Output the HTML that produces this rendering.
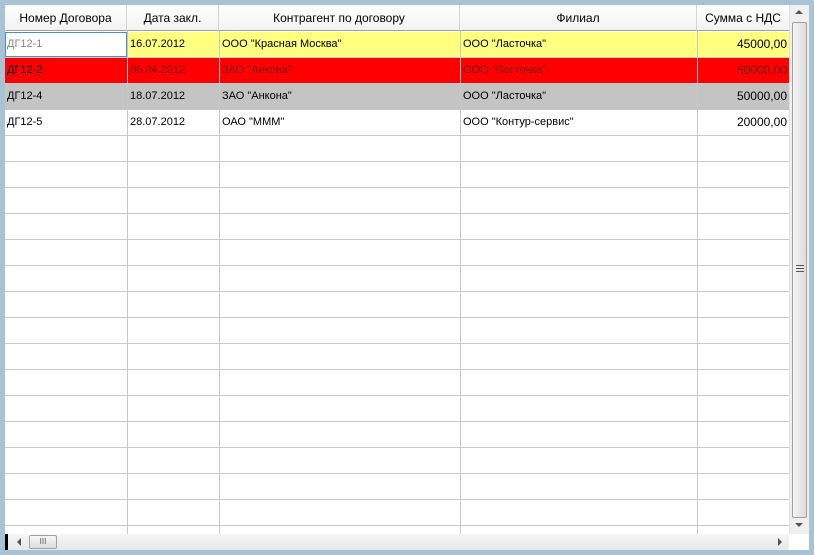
<!DOCTYPE html>
<html><head><meta charset="utf-8"><style>
*{margin:0;padding:0;box-sizing:border-box}
body{width:814px;height:555px;background:#a9c2d4;position:relative;overflow:hidden;font-family:"Liberation Sans",Arial,sans-serif}
#g{position:absolute;left:5px;top:5px;width:804px;height:545px;background:#fff}
.h{position:absolute;top:0;height:26px;font-size:12px;line-height:26px;text-align:center;color:#000;background:linear-gradient(#fff,#f3f3f3);border-right:1px solid #d5d5d5;border-bottom:1px solid #a0a0a0}
.vl{position:absolute;top:26px;height:503px;width:1px;background:#c8c8c8}
.hl{position:absolute;left:0;width:784px;height:1px;background:#c8c8c8}
.r{position:absolute;left:0;width:784px;height:25px}
.c{position:absolute;font-size:11px;line-height:25px;padding-left:2px;white-space:nowrap}
.dr{color:#7a0000}
</style></head><body>
<div id="g">
<div class="h" style="left:0;width:122px">Номер Договора</div>
<div class="h" style="left:122px;width:92px">Дата закл.</div>
<div class="h" style="left:214px;width:241px">Контрагент по договору</div>
<div class="h" style="left:455px;width:237px">Филиал</div>
<div class="h" style="left:692px;width:92px;border-right:none">Сумма с НДС</div>

<div class="r" style="top:27px;background:#ffff80"></div>
<div class="r" style="top:53px;background:#ff0000"></div>
<div class="r" style="top:79px;background:#c4c4c4"></div>
<div style="position:absolute;left:0;top:27px;width:122px;height:25px;background:#fff;border:1px solid #4a8ec8"></div>

<div class="vl" style="left:122px"></div>
<div class="vl" style="left:214px"></div>
<div class="vl" style="left:455px"></div>
<div class="vl" style="left:692px"></div>

<div class="hl" style="top:52px"></div><div class="hl" style="top:78px"></div><div class="hl" style="top:104px"></div><div class="hl" style="top:130px"></div><div class="hl" style="top:156px"></div><div class="hl" style="top:182px"></div><div class="hl" style="top:208px"></div><div class="hl" style="top:234px"></div><div class="hl" style="top:260px"></div><div class="hl" style="top:286px"></div><div class="hl" style="top:312px"></div><div class="hl" style="top:338px"></div><div class="hl" style="top:364px"></div><div class="hl" style="top:390px"></div><div class="hl" style="top:416px"></div><div class="hl" style="top:442px"></div><div class="hl" style="top:468px"></div><div class="hl" style="top:494px"></div><div class="hl" style="top:520px"></div>

<div class="c" style="left:0;top:27px;color:#888">ДГ12-1</div>
<div class="c" style="left:123px;top:27px">16.07.2012</div>
<div class="c" style="left:215px;top:27px">ООО "Красная Москва"</div>
<div class="c" style="left:456px;top:27px">ООО "Ласточка"</div>
<div class="c" style="left:693px;top:27px;width:89px;text-align:right;font-size:12px">45000,00</div>

<div class="c" style="left:0;top:53px">ДГ12-2</div>
<div class="c dr" style="left:123px;top:53px">06.04.2012</div>
<div class="c dr" style="left:215px;top:53px">ЗАО "Анкона"</div>
<div class="c dr" style="left:456px;top:53px">ООО "Ласточка"</div>
<div class="c dr" style="left:693px;top:53px;width:89px;text-align:right;font-size:12px">50000,00</div>

<div class="c" style="left:0;top:79px">ДГ12-4</div>
<div class="c" style="left:123px;top:79px">18.07.2012</div>
<div class="c" style="left:215px;top:79px">ЗАО "Анкона"</div>
<div class="c" style="left:456px;top:79px">ООО "Ласточка"</div>
<div class="c" style="left:693px;top:79px;width:89px;text-align:right;font-size:12px">50000,00</div>

<div class="c" style="left:0;top:105px">ДГ12-5</div>
<div class="c" style="left:123px;top:105px">28.07.2012</div>
<div class="c" style="left:215px;top:105px">ОАО "МММ"</div>
<div class="c" style="left:456px;top:105px">ООО "Контур-сервис"</div>
<div class="c" style="left:693px;top:105px;width:89px;text-align:right;font-size:12px">20000,00</div>

<div style="position:absolute;left:784px;top:0;width:20px;height:529px;background:#f0f0f0;border-left:1px solid #e0e0e0">
<div style="position:absolute;left:5px;top:5px;width:0;height:0;border-left:4px solid transparent;border-right:4px solid transparent;border-bottom:4px solid #555"></div>
<div style="position:absolute;left:2px;top:17px;width:15px;height:496px;border:1px solid #a0a0a0;border-radius:2px;background:linear-gradient(90deg,#f4f4f4,#dcdcdc)"></div>
<div style="position:absolute;left:6px;top:260px;width:8px;height:7px;border-top:1px solid #555;border-bottom:1px solid #555"><div style="margin-top:2px;height:1px;background:#555"></div></div>
<div style="position:absolute;left:5px;top:518px;width:0;height:0;border-left:4px solid transparent;border-right:4px solid transparent;border-top:4px solid #555"></div>
</div>
<div style="position:absolute;left:0;top:529px;width:784px;height:16px;background:linear-gradient(#f6f6f6,#e8e8e8)">
<div style="position:absolute;left:0;top:0;width:3px;height:16px;background:#000"></div>
<div style="position:absolute;left:12px;top:4px;width:0;height:0;border-top:4px solid transparent;border-bottom:4px solid transparent;border-right:4px solid #555"></div>
<div style="position:absolute;left:24px;top:1px;width:28px;height:14px;border:1px solid #a0a0a0;border-radius:2px;background:linear-gradient(#f8f8f8,#dcdcdc);font-size:8px;line-height:11px;text-align:center;color:#555">III</div>
<div style="position:absolute;left:773px;top:4px;width:0;height:0;border-top:4px solid transparent;border-bottom:4px solid transparent;border-left:4px solid #555"></div>
</div>
</div>
</body></html>
